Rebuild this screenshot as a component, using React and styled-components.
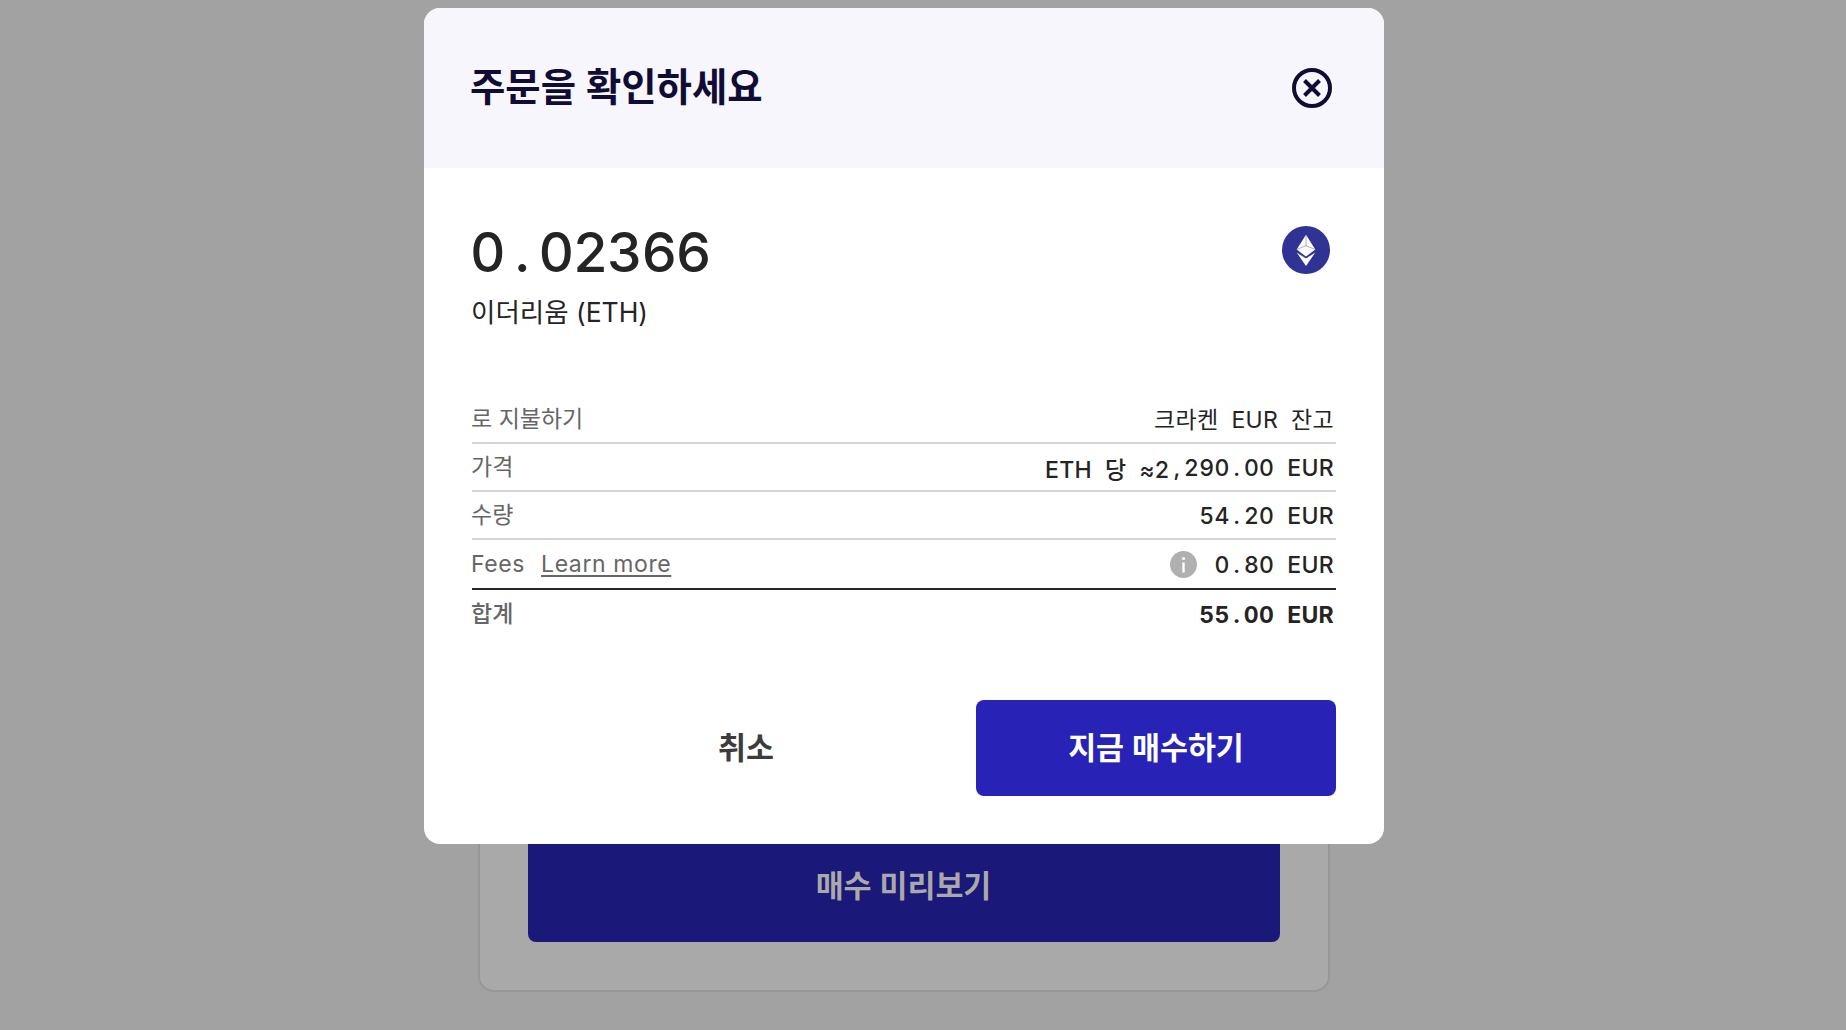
import React from "react";
import styled, { createGlobalStyle } from "styled-components";

const Global = createGlobalStyle`
  html, body { margin: 0; padding: 0; }
  body { font-family: "Noto Sans CJK KR", "Noto Sans", sans-serif; }
`;

const KR = `"Noto Sans", "Noto Sans CJK KR", sans-serif`;
const NUM = `Inter, "Noto Sans CJK KR", sans-serif`;

const Page = styled.div`
  position: relative;
  box-sizing: border-box;
  height: 1030px;
  overflow: hidden;
  background: #a2a2a2;
  display: flex;
  flex-direction: column;
  align-items: center;
  padding: 100px 39px 38px 0;
`;

const BackCard = styled.div`
  box-sizing: border-box;
  flex: 1;
  width: 852px;
  display: flex;
  flex-direction: column;
  justify-content: flex-end;
  align-items: center;
  padding: 0 48px 48px;
  background: #a9a9a9;
  border: 2px solid #979797;
  border-radius: 16px;
`;

const PreviewButton = styled.div`
  width: 752px;
  height: 112px;
  border-radius: 8px;
  background: #1a1878;
  color: #a9a9a9;
  font-family: ${KR};
  font-size: 30.4px;
  font-weight: 600;
  line-height: 112px;
  text-align: center;
  flex: none;
`;

const Modal = styled.section`
  position: absolute;
  left: 424px;
  top: 8px;
  width: 960px;
  height: 836px;
  background: #fff;
  border-radius: 16px;
  overflow: hidden;
  display: flex;
  flex-direction: column;
`;

const Header = styled.header`
  height: 160px;
  flex: none;
  box-sizing: border-box;
  background: #f6f6fc;
  padding: 0 52px 0 46px;
  display: flex;
  align-items: center;
  justify-content: space-between;
`;

const Title = styled.h2`
  margin: 0 0 4px;
  font-family: ${KR};
  font-size: 38.4px;
  font-weight: 600;
  color: #110c33;
  line-height: 1;
`;

const CloseIcon = styled.svg`
  width: 40px;
  height: 40px;
  display: block;
`;

const Body = styled.div`
  flex: 1;
  padding: 0 48px 48px;
  display: flex;
  flex-direction: column;
`;

const AmountRow = styled.div`
  display: flex;
  justify-content: space-between;
  align-items: flex-start;
  padding: 50px 6px 0 0;
  height: 228px;
  box-sizing: border-box;
`;

const AmountText = styled.div`
  display: flex;
  flex-direction: column;
  margin-left: -2px;
`;

const Amount = styled.div`
  font-family: ${NUM};
  font-variant-numeric: tabular-nums;
  font-size: 55px;
  line-height: 68px;
  font-weight: 500;
  color: #242424;
  letter-spacing: -1.3px;
`;

const Asset = styled.div`
  font-family: ${NUM};
  font-size: 26.5px;
  line-height: 40px;
  color: #242424;
  margin-top: 6px;
  margin-left: 1px;
`;

const CoinIcon = styled.svg`
  width: 48px;
  height: 48px;
  display: block;
  margin-top: 8px;
`;

const Table = styled.div`
  display: flex;
  flex-direction: column;
`;

const Row = styled.div`
  box-sizing: border-box;
  height: ${(p) => p.$h}px;
  display: flex;
  align-items: center;
  justify-content: space-between;
  border-bottom: ${(p) => (p.$line ? `2px solid ${p.$line}` : "0")};
`;

const Label = styled.span`
  font-family: ${NUM};
  font-size: 23px;
  color: #666;
  display: flex;
  align-items: center;
  gap: 16px;
  margin-left: -1px;
  padding-bottom: ${(p) => (p.$latin ? 0 : 4)}px;
  letter-spacing: ${(p) => (p.$latin ? 0.6 : 0)}px;
  font-weight: ${(p) => (p.$strong ? 500 : 400)};
`;

const LearnMore = styled.a`
  color: #666;
  text-decoration: underline;
  text-underline-offset: 3px;
`;

const Value = styled.span`
  font-family: ${NUM};
  font-variant-numeric: tabular-nums;
  font-size: 23px;
  color: #242424;
  letter-spacing: 0.3px;
  word-spacing: 6.5px;
  display: flex;
  align-items: center;
  padding: ${(p) => (p.$hangul ? 0 : 1)}px 2px ${(p) => (p.$hangul ? 2 : 0)}px 0;
  font-weight: ${(p) => (p.$strong ? 700 : p.$hangul ? 400 : 450)};
  white-space: pre;
`;

const Punct = styled.span`
  display: inline-block;
  width: ${(p) => p.$w}em;
  text-align: center;
`;

const InfoIcon = styled.svg`
  width: 27px;
  height: 27px;
  margin-right: 17px;
  display: block;
`;

const Footer = styled.div`
  margin-top: auto;
  display: flex;
  align-items: stretch;
  padding-left: 44px;
`;

const CancelButton = styled.button`
  flex: 1;
  height: 96px;
  border: 0;
  background: none;
  font-family: ${KR};
  font-size: 30.4px;
  font-weight: 600;
  color: #3c3c3c;
  padding: 0 0 5px;
`;

const BuyButton = styled.button`
  width: 360px;
  height: 96px;
  border: 0;
  border-radius: 8px;
  background: #2823b6;
  color: #fff;
  font-family: ${KR};
  font-size: 30.4px;
  font-weight: 600;
  padding: 0 0 5px;
`;

const Tab = ({ text, w = 0.62 }) =>
  text.split(/([.,])/).map((part, i) =>
    part === "." || part === "," ? (
      <Punct key={i} $w={w}>{part}</Punct>
    ) : (
      part
    )
  );

export default function App() {
  return (
    <Page>
      <Global />
      <BackCard>
        <PreviewButton>매수 미리보기</PreviewButton>
      </BackCard>
      <Modal>
        <Header>
          <Title>주문을 확인하세요</Title>
          <CloseIcon viewBox="0 0 40 40" fill="none" stroke="#110c33" strokeWidth="4">
            <circle cx="20" cy="20" r="18" />
            <path d="M12.5 12.5 27.5 27.5M27.5 12.5 12.5 27.5" />
          </CloseIcon>
        </Header>
        <Body>
          <AmountRow>
            <AmountText>
              <Amount><Tab text="0.02366" /></Amount>
              <Asset>이더리움 (ETH)</Asset>
            </AmountText>
            <CoinIcon viewBox="0 0 48 48">
              <circle cx="24" cy="24" r="24" fill="#2f3393" />
              <path d="M24 8.7 33.3 23.5 24 30.6 14.7 23.5Z" fill="#fff" />
              <path d="M14.7 26.5 24 32.6 33.3 26.5 24 40Z" fill="#fff" />
              <path d="M14.7 23.5 24 19.7 33.3 23.5M24 8.7V19.7" fill="none" stroke="#6a6ec4" strokeWidth="0.6" />
            </CoinIcon>
          </AmountRow>
          <Table>
            <Row $h={48} $line="#d4d4d4">
              <Label>로 지불하기</Label>
              <Value $hangul>크라켄 EUR 잔고</Value>
            </Row>
            <Row $h={48} $line="#d4d4d4">
              <Label>가격</Label>
              <Value>ETH 당 ≈<Tab text="2,290.00" /> EUR</Value>
            </Row>
            <Row $h={48} $line="#d4d4d4">
              <Label>수량</Label>
              <Value><Tab text="54.20" /> EUR</Value>
            </Row>
            <Row $h={50} $line="#242424">
              <Label $latin>
                Fees <LearnMore>Learn more</LearnMore>
              </Label>
              <Value>
                <InfoIcon viewBox="0 0 27 27">
                  <circle cx="13.5" cy="13.5" r="13.5" fill="#b0b0b0" />
                  <rect x="12.3" y="11.5" width="2.4" height="10" fill="#fff" />
                  <circle cx="13.5" cy="7.5" r="1.6" fill="#fff" />
                </InfoIcon>
                <span><Tab text="0.80" /> EUR</span>
              </Value>
            </Row>
            <Row $h={48}>
              <Label $strong>합계</Label>
              <Value $strong><Tab text="55.00" /> EUR</Value>
            </Row>
          </Table>
          <Footer>
            <CancelButton>취소</CancelButton>
            <BuyButton>지금 매수하기</BuyButton>
          </Footer>
        </Body>
      </Modal>
    </Page>
  );
}
